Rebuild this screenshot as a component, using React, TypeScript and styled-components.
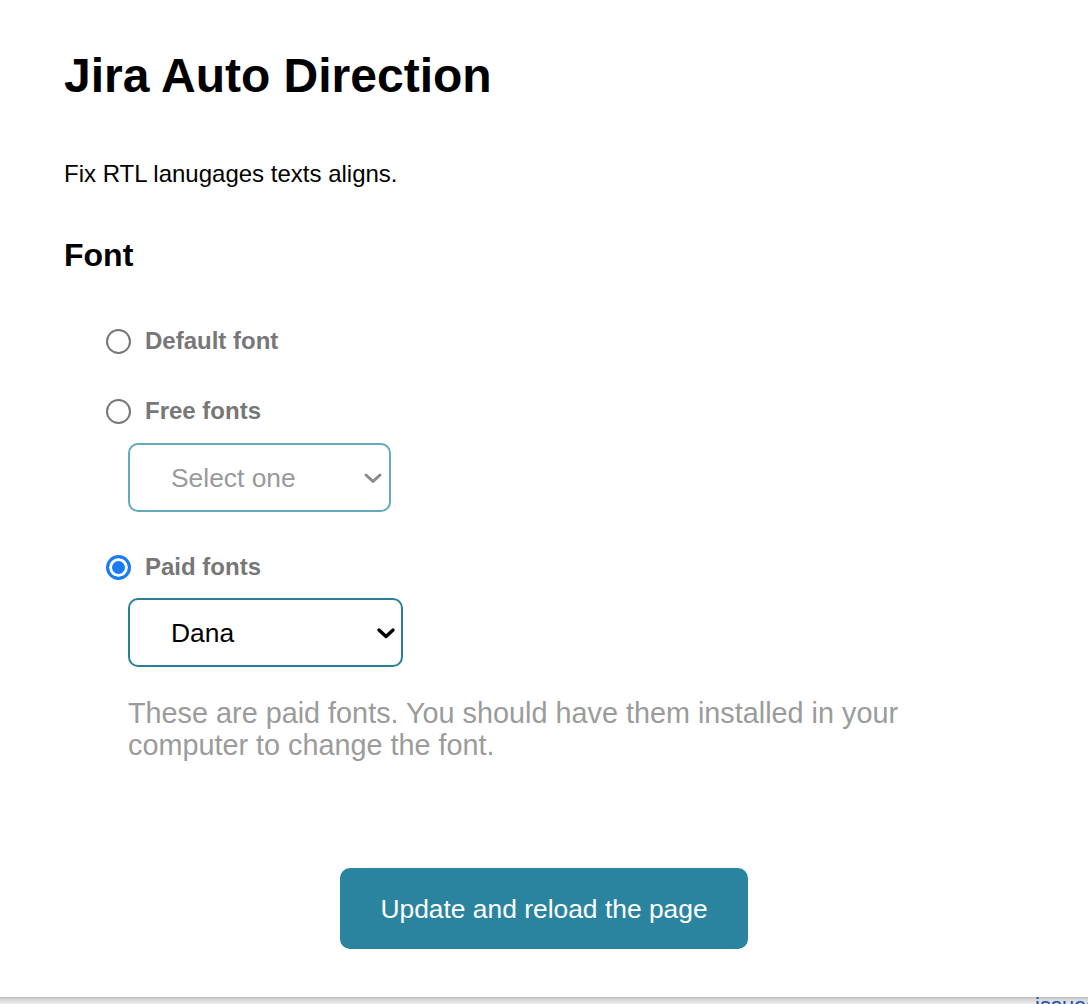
import React, { useState } from "react";
import styled, { createGlobalStyle } from "styled-components";

const Global = createGlobalStyle`
  html, body { margin: 0; padding: 0; background: #fff; }
  body { font-family: "Liberation Sans", Arial, Helvetica, sans-serif; color: #000; }
  * { box-sizing: border-box; }
`;

const Page = styled.div`
  display: flex;
  flex-direction: column;
  height: 100vh;
  overflow: hidden;
`;

const Content = styled.main`
  flex: 1;
  padding: 48px 0 0 64px;
  display: flex;
  flex-direction: column;
`;

const Title = styled.h1`
  margin: 0;
  font-size: 48px;
  line-height: 55px;
  font-weight: 700;
`;

const Description = styled.p`
  margin: 57px 0 0;
  font-size: 24px;
  line-height: 28px;
`;

const SectionTitle = styled.h2`
  margin: 49px 0 0;
  font-size: 32px;
  line-height: 37px;
  font-weight: 700;
`;

const Options = styled.div`
  display: flex;
  flex-direction: column;
  padding-left: 42px;
  margin-top: 53px;
`;

const OptionRow = styled.label<{ $gap: number }>`
  display: flex;
  align-items: center;
  gap: 14px;
  margin-top: ${(p) => p.$gap}px;
  font-size: 24px;
  line-height: 28px;
  font-weight: 700;
  color: #777;
  cursor: pointer;
`;

const Radio = styled.input.attrs({ type: "radio" })`
  appearance: none;
  margin: 0;
  width: 25px;
  height: 25px;
  border-radius: 50%;
  border: 2px solid #767676;
  background: #fff;
  flex: none;
  &:checked {
    border: 3px solid #1a7bf6;
    background: #1a7bf6;
    box-shadow: inset 0 0 0 3px #fff;
  }
`;

const SelectWrap = styled.div<{ $width: number; $top: number }>`
  position: relative;
  width: ${(p) => p.$width}px;
  margin: ${(p) => p.$top}px 0 0 22px;
`;

const Select = styled.select<{ $muted?: boolean }>`
  appearance: none;
  width: 100%;
  height: 69px;
  padding: 0 0 0 41px;
  border: 2px solid ${(p) => (p.$muted ? "#62a9b9" : "#2a7f96")};
  border-radius: 10px;
  background: #fff;
  font-family: "Liberation Sans", Arial, sans-serif;
  font-size: 26.4px;
  color: ${(p) => (p.$muted ? "#9a9a9a" : "#000")};
  outline: none;
  &:disabled { opacity: 1; }
`;

const Chevron = styled.svg<{ $muted?: boolean }>`
  position: absolute;
  right: ${(p) => (p.$muted ? 8 : 7)}px;
  top: 50%;
  transform: translateY(-50%);
  width: 20px;
  height: 14px;
  pointer-events: none;
  color: ${(p) => (p.$muted ? "#8a8a8a" : "#000")};
`;

const Help = styled.p`
  margin: 30px 0 0 22px;
  max-width: 800px;
  font-size: 28.8px;
  line-height: 32px;
  color: #9b9b9b;
`;

const ButtonRow = styled.div`
  display: flex;
  justify-content: center;
  margin: 107px 0 0 -64px;
`;

const Button = styled.button`
  width: 408px;
  height: 81px;
  padding: 2px 0 0;
  border: none;
  border-radius: 10px;
  background: #2a849f;
  color: #fff;
  font-family: "Liberation Sans", Arial, sans-serif;
  font-size: 26.4px;
  cursor: pointer;
`;

const Footer = styled.footer`
  flex: none;
  height: 7px;
  display: flex;
  padding-left: 1035px;
  overflow: hidden;
  background: linear-gradient(#b9b9b9 0, #d4d4d4 2px, #ececec 7px);
`;

const FooterLink = styled.span`
  white-space: nowrap;
  font-size: 22px;
  line-height: 22px;
  margin-top: -2px;
  color: #1d4fb0;
  font-weight: 400;
`;

const ChevronIcon = ({ muted }: { muted?: boolean }) => (
  <Chevron $muted={muted} viewBox="0 0 20 14">
    <path
      d="M3 4 L10 10.5 L17 4"
      fill="none"
      stroke="currentColor"
      strokeWidth={muted ? 3 : 3.4}
      strokeLinecap="round"
      strokeLinejoin="round"
    />
  </Chevron>
);

export default function App() {
  const [choice, setChoice] = useState("paid");
  return (
    <Page>
      <Global />
      <Content>
        <Title>Jira Auto Direction</Title>
        <Description>Fix RTL lanugages texts aligns.</Description>
        <SectionTitle>Font</SectionTitle>
        <Options>
          <OptionRow $gap={0}>
            <Radio name="font" checked={choice === "default"} onChange={() => setChoice("default")} />
            Default font
          </OptionRow>
          <OptionRow $gap={42}>
            <Radio name="font" checked={choice === "free"} onChange={() => setChoice("free")} />
            Free fonts
          </OptionRow>
          <SelectWrap $width={263} $top={18}>
            <Select $muted disabled={choice !== "free"} defaultValue="">
              <option value="">Select one</option>
              <option value="vazir">Vazir</option>
              <option value="sahel">Sahel</option>
            </Select>
            <ChevronIcon muted />
          </SelectWrap>
          <OptionRow $gap={41}>
            <Radio name="font" checked={choice === "paid"} onChange={() => setChoice("paid")} />
            Paid fonts
          </OptionRow>
          <SelectWrap $width={275} $top={17}>
            <Select defaultValue="dana">
              <option value="dana">Dana</option>
              <option value="iranyekan">IRANYekan</option>
            </Select>
            <ChevronIcon />
          </SelectWrap>
          <Help>
            These are paid fonts. You should have them installed in your computer to change the font.
          </Help>
        </Options>
        <ButtonRow>
          <Button>Update and reload the page</Button>
        </ButtonRow>
      </Content>
      <Footer>
        <FooterLink>issues</FooterLink>
      </Footer>
    </Page>
  );
}
